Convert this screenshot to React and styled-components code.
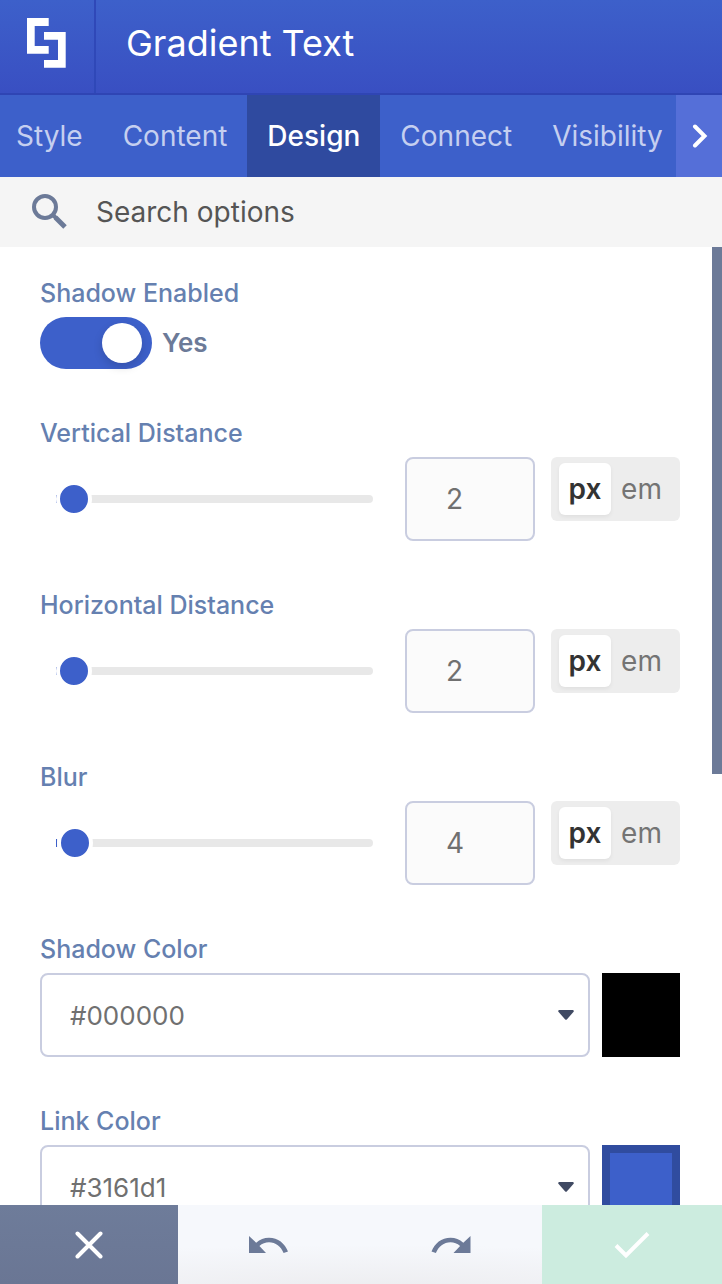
import React, { useState } from "react";
import styled, { createGlobalStyle } from "styled-components";

const blue = "#3d60ca";
const slate = "#6c7a98";
const line = "#c9cde0";

const GlobalStyle = createGlobalStyle`
  * { box-sizing: border-box; }
  body { margin: 0; background: #fff; font-family: Inter, "Liberation Sans", sans-serif; }
  button, input { font: inherit; margin: 0; }
  button { border: 0; padding: 0; background: none; cursor: pointer; }
`;

const Panel = styled.div`
  display: flex;
  flex-direction: column;
  height: 100vh;
  overflow: hidden;
`;

const Header = styled.header`
  display: flex;
  flex: none;
  height: 95px;
  border-bottom: 2px solid #2f45b4;
  background: linear-gradient(#3d60ca, #394fc2);
`;

const Logo = styled.a`
  display: flex;
  align-items: center;
  width: 96px;
  padding: 0 0 8px 27px;
  border-right: 2px solid #2f48b8;
`;

const Title = styled.h1`
  margin: 0;
  padding-left: 30px;
  font-size: 36px;
  line-height: 86px;
  font-weight: 400;
  color: #fff;
`;

const Tabs = styled.nav`
  display: flex;
  flex: none;
  height: 82px;
  background: ${blue};
`;

const TabList = styled.div`
  display: flex;
  flex: 1;
  min-width: 0;
  overflow: hidden;
`;

const Tab = styled.button`
  flex: none;
  padding: 0 20px;
  font-size: 28px;
  font-weight: ${(p) => (p.$active ? 500 : 400)};
  color: ${(p) => (p.$active ? "#fff" : "#c5cff0")};
  background: ${(p) => (p.$active ? "#2f4a9f" : "transparent")};
  &:first-child { padding-left: 16px; }
`;

const TabNext = styled.button`
  display: flex;
  align-items: center;
  justify-content: center;
  flex: none;
  width: 46px;
  padding-left: 2px;
  background: #556fd8;
`;

const Search = styled.label`
  display: flex;
  align-items: center;
  flex: none;
  gap: 28px;
  height: 70px;
  padding: 0 32px;
  background: #f5f5f5;
`;

const SearchInput = styled.input`
  flex: 1;
  min-width: 0;
  padding: 0;
  border: 0;
  outline: 0;
  background: none;
  font-size: 28px;
  color: #555;
  &::placeholder { color: #555; opacity: 1; }
`;

const Body = styled.main`
  display: flex;
  flex: 1;
  min-height: 0;
`;

const Options = styled.div`
  display: flex;
  flex-direction: column;
  flex: 1;
  gap: 48px;
  min-width: 0;
  padding: 30px 32px 48px 40px;
  overflow-y: auto;
  scrollbar-width: none;
`;

const ScrollTrack = styled.div`
  flex: none;
  width: 10px;
`;

const ScrollThumb = styled.div`
  height: 55%;
  background: ${slate};
`;

const Field = styled.div`
  display: flex;
  flex-direction: column;
  flex: none;
  gap: 8px;
`;

const Label = styled.label`
  font-size: 25px;
  line-height: 32px;
  font-weight: 500;
  color: #6580b0;
`;

const Row = styled.div`
  display: flex;
  align-items: ${(p) => p.$align || "flex-start"};
  gap: ${(p) => p.$gap}px;
`;

const Switch = styled.input`
  appearance: none;
  width: 112px;
  height: 52px;
  padding: 6px 10px;
  border-radius: 26px;
  background: ${(p) => (p.checked ? blue : "#c9cde0")};
  cursor: pointer;
  &::before {
    content: "";
    display: block;
    width: 40px;
    height: 40px;
    margin-left: ${(p) => (p.checked ? "auto" : "0")};
    border-radius: 50%;
    background: #fff;
    box-shadow: 0 4px 10px rgba(0, 0, 0, 0.15);
  }
`;

const SwitchState = styled.span`
  font-size: 26px;
  line-height: 52px;
  font-weight: 600;
  color: ${slate};
`;

const SliderCell = styled.div`
  display: flex;
  align-items: center;
  flex: 1;
  min-width: 0;
  height: 84px;
  padding: 0 16px;
`;

const Slider = styled.input`
  appearance: none;
  flex: 1;
  min-width: 0;
  height: 36px;
  background: none;
  cursor: pointer;
  &::-webkit-slider-runnable-track {
    height: 8px;
    border-radius: 0 4px 4px 0;
    background: linear-gradient(90deg, ${blue} 1px, #e8e8e8 1px);
  }
  &::-webkit-slider-thumb {
    appearance: none;
    width: 36px;
    height: 36px;
    margin-top: -14px;
    border: 4px solid #fff;
    border-radius: 50%;
    background: ${blue};
  }
`;

const NumberInput = styled.input`
  appearance: textfield;
  width: 130px;
  height: 84px;
  padding: 0 0 0 39px;
  border: 2px solid ${line};
  border-radius: 8px;
  background: #fbfbfb;
  font-size: 28px;
  color: #707070;
  &::-webkit-inner-spin-button { appearance: none; }
`;

const Units = styled.div`
  display: flex;
  flex: none;
  width: 129px;
  height: 64px;
  padding: 6px 8px;
  border-radius: 6px;
  background: #ededed;
`;

const Unit = styled.label`
  width: ${(p) => (p.$active ? 52 : 61)}px;
  border-radius: 6px;
  font-size: 28px;
  line-height: 52px;
  text-align: center;
  font-weight: ${(p) => (p.$active ? 600 : 400)};
  color: ${(p) => (p.$active ? "#333" : "#747474")};
  background: ${(p) => (p.$active ? "#fff" : "transparent")};
  box-shadow: ${(p) => (p.$active ? "0 2px 4px rgba(0, 0, 0, 0.06)" : "none")};
  cursor: pointer;
`;

const UnitRadio = styled.input`
  position: absolute;
  opacity: 0;
  pointer-events: none;
`;

const ColorBox = styled.div`
  display: flex;
  align-items: center;
  flex: 1;
  min-width: 0;
  height: 84px;
  padding: 0 14px 0 28px;
  border: 2px solid ${line};
  border-radius: 8px;
`;

const ColorInput = styled.input`
  flex: 1;
  min-width: 0;
  padding: 0;
  border: 0;
  outline: 0;
  font-size: 26px;
  color: #707070;
`;

const CaretButton = styled.button`
  display: flex;
`;

const Swatch = styled.button`
  flex: none;
  width: 78px;
  height: 84px;
  border: 8px solid ${(p) => p.$edge};
  background: ${(p) => p.$color};
`;

const Footer = styled.footer`
  display: grid;
  grid-template-columns: 178fr 182fr 182fr 180fr;
  flex: none;
  height: 79px;
  background: radial-gradient(ellipse 70% 60% at 50% 110%, #ececef, #f6f8fc);
`;

const Action = styled.button`
  display: flex;
  align-items: center;
  justify-content: center;
  background: ${(p) => p.$bg || "transparent"};
`;

function SliderField({ id, label, initial }) {
  const [value, setValue] = useState(initial);
  const [unit, setUnit] = useState("px");
  const change = (e) => setValue(e.target.value);
  return (
    <Field>
      <Label htmlFor={id}>{label}</Label>
      <Row $gap={16}>
        <SliderCell>
          <Slider type="range" min="0" max="1200" value={value} onChange={change} aria-label={label} />
        </SliderCell>
        <NumberInput id={id} type="number" value={value} onChange={change} />
        <Units role="radiogroup" aria-label={`${label} unit`}>
          {["px", "em"].map((u) => (
            <Unit key={u} $active={u === unit}>
              <UnitRadio type="radio" name={`${id}-unit`} checked={u === unit} onChange={() => setUnit(u)} />
              {u}
            </Unit>
          ))}
        </Units>
      </Row>
    </Field>
  );
}

function ColorField({ id, label, initial, color, edge }) {
  const [value, setValue] = useState(initial);
  return (
    <Field>
      <Label htmlFor={id}>{label}</Label>
      <Row $gap={12}>
        <ColorBox>
          <ColorInput id={id} type="text" value={value} onChange={(e) => setValue(e.target.value)} />
          <CaretButton type="button" aria-label={`${label} presets`}>
            <svg width="16" height="10" viewBox="0 0 16 10">
              <path d="M1.2 0H14.8Q16.6 .5 15.4 2L9 9.3Q8 10.4 7 9.3L.6 2Q-.6 .5 1.2 0Z" fill="#404a63" />
            </svg>
          </CaretButton>
        </ColorBox>
        <Swatch type="button" aria-label={`Pick ${label}`} $color={color} $edge={edge} />
      </Row>
    </Field>
  );
}

export default function App() {
  const [tab, setTab] = useState("Design");
  const [shadow, setShadow] = useState(true);
  return (
    <Panel>
      <GlobalStyle />
      <Header>
        <Logo href="#" aria-label="Home">
          <svg width="39" height="50" viewBox="0 0 39 50" fill="#fff">
            <path d="M0 0H21.7V8H7.7V28H21.7V35.7H0Z" />
            <path d="M17 14H38.7V49.7H17V42H31V21.7H17Z" />
          </svg>
        </Logo>
        <Title>Gradient Text</Title>
      </Header>
      <Tabs>
        <TabList>
          {["Style", "Content", "Design", "Connect", "Visibility"].map((t) => (
            <Tab key={t} type="button" $active={t === tab} onClick={() => setTab(t)}>{t}</Tab>
          ))}
        </TabList>
        <TabNext type="button" aria-label="More tabs">
          <svg width="16" height="24" viewBox="0 0 16 24" fill="none" stroke="#fff" strokeWidth="4" strokeLinecap="round">
            <path d="M3 2.5L12.5 12L3 21.5" />
          </svg>
        </TabNext>
      </Tabs>
      <Search>
        <svg width="36" height="36" viewBox="0 0 36 36" fill="none" stroke={slate}>
          <circle cx="13" cy="13" r="11" strokeWidth="4" />
          <path d="M21 21L24 24" strokeWidth="4" />
          <path d="M23.5 23.5L33 33" strokeWidth="5" />
        </svg>
        <SearchInput type="text" placeholder="Search options" aria-label="Search options" />
      </Search>
      <Body>
        <Options>
          <Field>
            <Label htmlFor="shadow">Shadow Enabled</Label>
            <Row $gap={10} $align="center">
              <Switch id="shadow" type="checkbox" role="switch" checked={shadow} onChange={() => setShadow(!shadow)} />
              <SwitchState>{shadow ? "Yes" : "No"}</SwitchState>
            </Row>
          </Field>
          <SliderField id="vertical" label="Vertical Distance" initial={2} />
          <SliderField id="horizontal" label="Horizontal Distance" initial={2} />
          <SliderField id="blur" label="Blur" initial={4} />
          <ColorField id="shadow-color" label="Shadow Color" initial="#000000" color="#000" edge="#000" />
          <ColorField id="link-color" label="Link Color" initial="#3161d1" color={blue} edge="#304c9f" />
        </Options>
        <ScrollTrack><ScrollThumb /></ScrollTrack>
      </Body>
      <Footer>
        <Action type="button" aria-label="Cancel" $bg="linear-gradient(#6e7c9a, #6a7694)">
          <svg width="28" height="28" viewBox="0 0 28 28" fill="none" stroke="#fff" strokeWidth="4" strokeLinecap="round">
            <path d="M2.5 2.5L25.5 25.5M25.5 2.5L2.5 25.5" />
          </svg>
        </Action>
        <Action type="button" aria-label="Undo">
          <svg width="40" height="18" viewBox="0 0 40 18" fill={slate}>
            <path d="M0 0L7.2 6.8C11 3.5 15 1.8 20 1.8C29 1.8 36 7.5 39 15.6L34.6 17C32 10.5 26.6 6.3 20 6.3C16.5 6.3 13.2 7.5 10.4 10.1L17 17H0Z" />
          </svg>
        </Action>
        <Action type="button" aria-label="Redo">
          <svg width="40" height="18" viewBox="0 0 40 18" fill={slate}>
            <path d="M39.5 0L32.3 6.8C28.5 3.5 24.5 1.8 19.5 1.8C10.5 1.8 3.5 7.5 .5 15.6L4.9 17C7.5 10.5 12.9 6.3 19.5 6.3C23 6.3 26.3 7.5 29.1 10.1L22.5 17H39.5Z" />
          </svg>
        </Action>
        <Action type="button" aria-label="Save" $bg="#ccecdf">
          <svg width="36" height="28" viewBox="0 0 36 28" fill="none" stroke="#fff" strokeWidth="4">
            <path d="M2 14.5L12 24.5L34 2.5" />
          </svg>
        </Action>
      </Footer>
    </Panel>
  );
}
